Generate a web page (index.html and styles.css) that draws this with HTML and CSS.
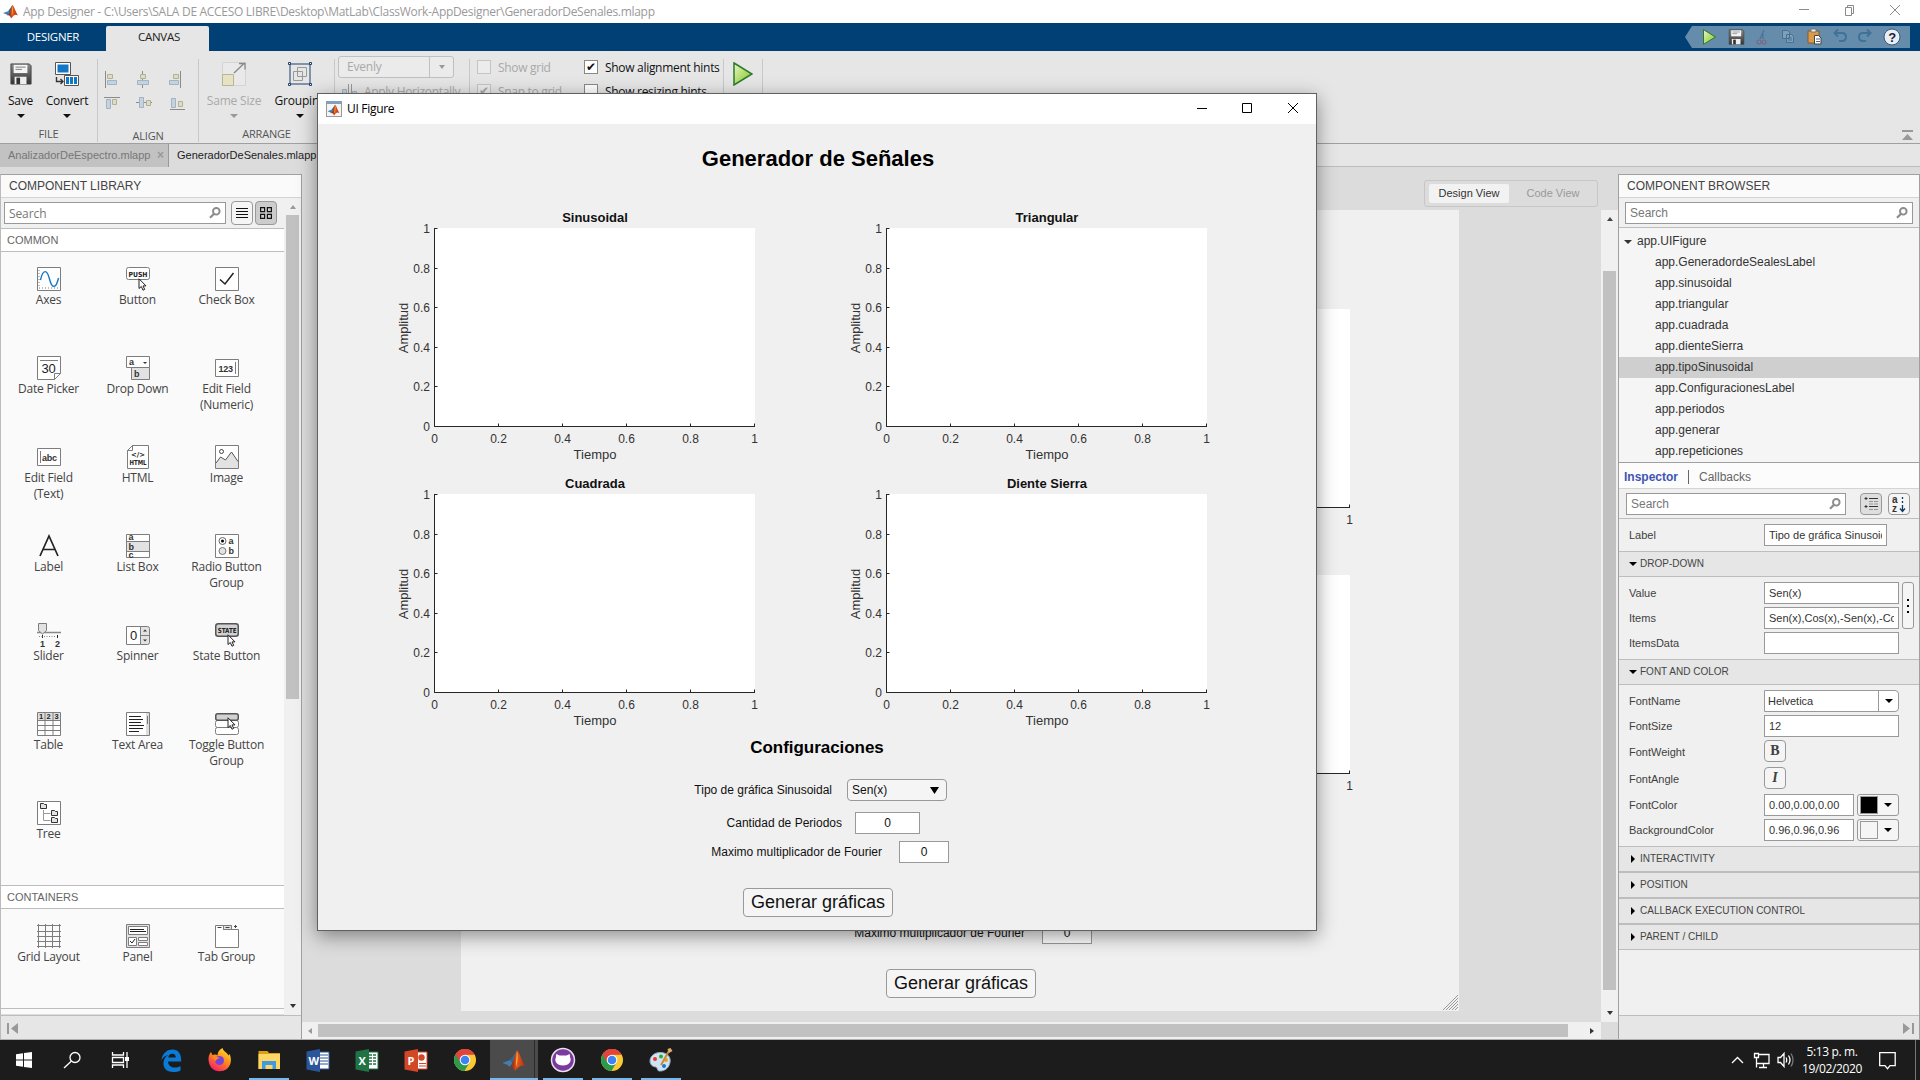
FILE: index.html
```html
<!DOCTYPE html>
<html lang="es">
<head>
<meta charset="utf-8">
<title>App Designer</title>
<link rel="stylesheet" href="styles.css">
</head>
<body>
<svg class="defs" width="0" height="0">
  <defs>
    <linearGradient id="gPlay" x1="0" y1="0" x2="1" y2="1"><stop offset="0" stop-color="#e9f7c4"/><stop offset="1" stop-color="#7cc41c"/></linearGradient>
    <linearGradient id="gDisk" x1="0" y1="0" x2="0" y2="1"><stop offset="0" stop-color="#8a8a8a"/><stop offset="1" stop-color="#333"/></linearGradient>
    <linearGradient id="gFox" x1=".8" y1="0" x2=".2" y2="1"><stop offset="0" stop-color="#ffe226"/><stop offset=".45" stop-color="#ff8a1e"/><stop offset="1" stop-color="#f5156c"/></linearGradient>
    <linearGradient id="gMat" x1="0" y1="0" x2="1" y2="0"><stop offset="0" stop-color="#7a1d10"/><stop offset=".5" stop-color="#e2571c"/><stop offset="1" stop-color="#b02a10"/></linearGradient>
  </defs>
  <symbol id="matlab" viewBox="0 0 24 24"><path d="M0 14.5 8 11.5 11.5 16 7.5 18.500 5 16.500z" fill="#3f7fb5"/><path d="M8 11.500 15 2 12 15.500 11.500 16z" fill="#2a6c9c"/><path d="M15 1.500C17 1.500 20 12 24 18.500 20 15.500 17 18 13 23 11.500 20 10 17 7.500 18.500 11 16 13 4 15 1.500z" fill="url(#gMat)"/><path d="M15 2c1.500 4 1 12-1 17-.5-5 1-12 1-17z" fill="#f7b23b"/></symbol>
  <symbol id="mag" viewBox="0 0 12 12"><circle cx="7.300" cy="4.300" r="3.300" fill="none" stroke="#8c8c8c" stroke-width="1.900"/><path d="M4.800 7 1 10.800" stroke="#8c8c8c" stroke-width="2.200"/></symbol>
  <symbol id="disk" viewBox="0 0 24 24"><path d="M1 1h20l2 2v20H1z" fill="url(#gDisk)" stroke="#444"/><path d="M4 2h15v9H4z" fill="#f4f4f4"/><path d="M6 4.500h11M6 7h7" stroke="#777"/><path d="M5 15h13v8H5z" fill="#eee"/><path d="M7 16h4v7H7z" fill="#333"/></symbol>
  <symbol id="play" viewBox="0 0 20 24"><path d="M1 1 19 12 1 23z" fill="url(#gPlay)" stroke="#2c7a2c" stroke-width="1.500"/></symbol>
  <symbol id="cursor" viewBox="0 0 9 13"><path d="M1 .8v9.700l2.300-2 1.700 3.700 1.700-.8-1.700-3.500h3z" fill="#fff" stroke="#222"/></symbol>
  <symbol id="chrome" viewBox="0 0 24 24"><circle cx="12" cy="12" r="11" fill="#fcc934"/><path d="M12 12 2.500 6.500A11 11 0 0 1 21.500 6.500L12 6.700z" fill="#e0443a"/><path d="M2.500 6.500A11 11 0 0 0 11.500 23L16.500 14.500 12 12z" fill="#2a9a4b"/><path d="M2.500 6.500A11 11 0 0 1 21.500 6.500H12L7 14z" fill="#e0443a"/><circle cx="12" cy="12" r="5.300" fill="#fff"/><circle cx="12" cy="12" r="4.300" fill="#3f83f0"/></symbol>
</svg>

<header class="titlebar">
  <svg width="17" height="15"><use href="#matlab"/></svg>
  <span class="app-title">App Designer - C:\Users\SALA DE ACCESO LIBRE\Desktop\MatLab\ClassWork-AppDesigner\GeneradorDeSenales.mlapp</span>
  <svg class="winctl" width="104" height="12" fill="none" stroke="#8a8a8a"><path d="M1 5.500h10M47.500 3.500h6v8h-6zM49.500 3.500v-2h6v8h-2M92 1l10 10M102 1 92 11"/></svg>
</header>

<nav class="ribbon-tabs">
  <span class="rtab">DESIGNER</span><span class="rtab active">CANVAS</span>
  <svg class="quick" width="225" height="22">
    <path d="M0 11 7 0H225V22H7z" fill="#668cab"/>
    <use href="#play" x="17" y="3" width="15" height="16"/>
    <use href="#disk" x="43" y="3" width="17" height="16"/>
    <g fill="none" stroke="#7b6683" stroke-width="1.200"><circle cx="74" cy="16" r="2"/><circle cx="79" cy="16" r="2"/></g><path d="M75 13 79 4M78 13V8" stroke="#4a7395" stroke-width="1.300"/>
    <g fill="#7fa0ba" stroke="#46708f"><path d="M97.500 4.500h5l2 2v6h-7zM101.500 8.500h5l2 2v6h-7z"/><path d="M103 12h4M103 14h4"/></g>
    <path d="M123 5h11v12h-11z" fill="#d99a4e" stroke="#8a5a20"/><path d="M126 3h5v3h-5z" fill="#eee" stroke="#777"/><path d="M129.500 9.500h4l2.500 2.500v6h-6.500z" fill="#fff" stroke="#444"/><path d="M131 13h4M131 15.500h4" stroke="#567"/>
    <g fill="none" stroke="#3f7299" stroke-width="2"><path d="M150 7h7q4 0 4 4t-4 4h-3M153 3.500 149.500 7l3.500 3.500"/><path d="M185 7h-7q-4 0-4 4t4 4h3M182 3.500l3.500 3.500-3.500 3.500"/></g>
    <circle cx="207" cy="11" r="8" fill="#e8eef5" stroke="#3b5876"/><text x="203.200" y="16" class="qmark">?</text>
  </svg>
</nav>

<section class="toolstrip">
  <div class="group g-file">
    <div class="tools">
      <div class="tool t-save"><svg width="22" height="24"><use href="#disk"/></svg><span>Save</span><i class="dn"></i></div>
      <div class="tool t-conv"><svg width="24" height="24"><path d="M.5.500h15v12H.500z" fill="#fff" stroke="#555"/><path d="M2.500 2.500h11v8h-11z" fill="#1277c4"/><path d="M1.500 15v4.500H8M5.500 17 8 19.500 5.500 22" fill="none" stroke="#333" stroke-width="1.400"/><path d="M9.500 13.500h14v10h-14z" fill="#fff" stroke="#555"/><path d="M11 15h3v7h-3zM15 15h3v7h-3zM19 15h3v7h-3z" fill="#1277c4"/></svg><span>Convert</span><i class="dn"></i></div>
    </div>
    <span class="glabel">FILE</span>
  </div>
  <div class="group g-align">
    <svg class="align" width="80" height="40" fill="#dcdcc8" stroke="#b4b28e">
      <g stroke="#8b8b8b"><path d="M.5 0v17M37.500 0v17M75.500 0v17M-1 26.500h16M65 38.500h15M31 31.500h16" fill="none"/></g>
      <path d="M2.500 3.500h5v4h-5zM35.500 3.500h5v4h-5zM68.500 3.500h5v4h-5zM7.500 28.500h4v5h-4zM41.500 29.500h4v5h-4zM73.500 30.500h4v5h-4z"/>
      <g fill="#c5d3df" stroke="#a3b3c1"><path d="M2.500 9.500h9v4h-9zM32.500 9.500h11v4h-11zM64.500 9.500h9v4h-9zM1.500 28.500h4v9h-4zM34.500 26.500h4v10h-4zM66.500 27.500h4v9h-4z"/></g>
    </svg>
    <span class="glabel">ALIGN</span>
  </div>
  <div class="group g-arr">
    <div class="tools">
      <div class="tool dis t-same"><svg width="24" height="24"><path d="M.5.500h23v23H.500z" fill="#e9e9e9" stroke="#d4d4d4"/><path d="M.5 12.500h11v11H.500z" fill="#e6e2c2" stroke="#b9b592"/><path d="M12 11 22 1.500M17 1.500h6v6" fill="none" stroke="#888" stroke-width="1.300"/></svg><span>Same Size</span><i class="dn"></i></div>
      <div class="tool t-grp"><svg width="24" height="24" fill="none" stroke="#1f3f6b"><path d="M2 2h20v20H2z"/><g stroke="#999"><path d="M5.500 9.500h9v9h-9zM9.500 5.500h9v9h-9z"/></g><path fill="#fff" d="M.5.500h2v2h-2zM21.500.500h2v2h-2zM.5 21.500h2v2h-2zM21.500 21.500h2v2h-2z"/></svg><span>Grouping</span><i class="dn"></i></div>
    </div>
    <span class="glabel">ARRANGE</span>
  </div>
  <div class="group g-space">
    <div class="evenly"><span>Evenly</span><b><i class="dn"></i></b></div>
    <div class="apply"><svg width="16" height="16" fill="#c5d3df" stroke="#a3b3c1"><path d="M.5 5.500h4v8h-4zM10.500 7.500h4v6h-4z"/><path d="M6.500 0v15M9.500 0v15" stroke="#999"/></svg><span>Apply Horizontally</span></div>
  </div>
  <div class="group g-view">
    <div class="checks dis"><label><i class="cb"></i>Show grid</label><label><i class="cb">✔</i>Snap to grid</label></div>
    <div class="checks"><label><i class="cb">✔</i><span>Show alignment hints</span></label><label><i class="cb"></i><span>Show resizing hints</span></label></div>
  </div>
  <div class="group g-run"><svg width="20" height="24"><use href="#play"/></svg></div>
  <svg class="collapse" width="11" height="11" fill="#999"><path d="M0 0h11v2H0zM5.500 4 11 10H0z"/></svg>
</section>

<div class="doctabs"><span class="dtab idle">AnalizadorDeEspectro.mlapp<b>×</b></span><span class="dtab on">GeneradorDeSenales.mlapp</span></div>

<main class="work">
  <aside class="panel library">
    <h2>COMPONENT LIBRARY</h2>
    <div class="libbody">
      <div class="libcol">
        <div class="searchrow"><div class="search seg"><span>Search</span><svg width="12" height="12"><use href="#mag"/></svg></div>
          <div class="tb"><svg width="12" height="12" stroke="#111"><path d="M0 1.500h12M0 4.500h12M0 7.500h12M0 10.500h12"/></svg></div>
          <div class="tb on"><svg width="12" height="12" fill="none" stroke="#111" stroke-width="1.200"><path d="M.6.600h4v4h-4zM7.400.600h4v4h-4zM.6 7.400h4v4h-4zM7.400 7.400h4v4h-4z"/></svg></div>
        </div>
        <h3>COMMON</h3>
        <div class="grid common">
          <div class="comp"><svg width="24" height="24"><path class="bx" d="M.5.500h23v23H.500z"/><path d="M2 3v18h20" fill="none" stroke="#777" stroke-dasharray="1 2"/><path d="M3.500 13C6 2 10 2 12.500 12S19 22 21.500 11" fill="none" stroke="#1277c4" stroke-width="1.400"/></svg><span>Axes</span></div>
          <div class="comp"><svg width="24" height="24"><rect class="bx" x=".5" y=".5" width="23" height="12" rx="2"/><text x="2.500" y="9.500" class="px" textLength="19" lengthAdjust="spacingAndGlyphs">PUSH</text><use href="#cursor" x="12" y="11" width="9" height="13"/></svg><span>Button</span></div>
          <div class="comp"><svg width="24" height="24"><path class="bx" d="M.5.500h23v23H.500z"/><path d="M5 12.500 10 17 18.500 6" fill="none" stroke="#222" stroke-width="1.500"/></svg><span>Check Box</span></div>
          <div class="comp"><svg width="24" height="24"><path class="bx" d="M.5.500h23v17l-6 6H.500zM17.500 23.500v-6h6M3 4.500h18"/><text x="4.500" y="17" class="ic12">30</text></svg><span>Date Picker</span></div>
          <div class="comp"><svg width="24" height="24"><path class="bx" d="M.5.500h23v11H.500z"/><path class="bx gy" d="M5.500 11.500h18v12h-18z"/><path d="M17 6h4l-2 2z" fill="#333"/><text x="3" y="9" class="ic9">a</text><text x="8" y="21" class="ic9">b</text></svg><span>Drop Down</span></div>
          <div class="comp"><svg width="24" height="24"><path class="bx" d="M.5 3.500h23v17H.500zM20.500 6v12"/><text x="3.500" y="15.500" class="ic9">123</text></svg><span>Edit Field<br>(Numeric)</span></div>
          <div class="comp"><svg width="24" height="24"><path class="bx" d="M.5 3.500h23v17H.500zM3.500 6v12"/><text x="5" y="15.500" class="ic9">abc</text></svg><span>Edit Field<br>(Text)</span></div>
          <div class="comp"><svg width="24" height="24"><path class="bx" d="M6.500.500h16v23h-21v-18zM6.500.500v5h-5"/><text x="5" y="11.500" class="px" textLength="14" lengthAdjust="spacingAndGlyphs">&lt;/&gt;</text><text x="3.500" y="20" class="px" textLength="17" lengthAdjust="spacingAndGlyphs">HTML</text></svg><span>HTML</span></div>
          <div class="comp"><svg width="24" height="24"><path class="bx" d="M.5.500h23v23H.500z"/><path d="M1 18 5.500 12l5 3L16.500 7 23 16.500V23H1z" fill="#e2e2e2"/><path d="M1 18 5.500 12l5 3L16.500 7 23 16.500" fill="none" stroke="#555"/><circle cx="6.500" cy="6.500" r="2" fill="none" stroke="#444"/></svg><span>Image</span></div>
          <div class="comp"><svg width="24" height="24"><path d="M3 22 12 2 21 22M6.500 15.500h11" fill="none" stroke="#222" stroke-width="1.700"/></svg><span>Label</span></div>
          <div class="comp"><svg width="24" height="24"><path class="bx" d="M.5.500h23v23H.500z"/><path class="bx gy" d="M.5 7.500h23v10H.500z"/><text x="2.500" y="5.500" class="ic9">a</text><text x="2.500" y="16" class="ic9">b</text><text x="2.500" y="24" class="ic9">c</text></svg><span>List Box</span></div>
          <div class="comp"><svg width="24" height="24"><path class="bx" d="M.5.500h23v23H.500z"/><circle cx="7.500" cy="7" r="3.500" fill="#fff" stroke="#666"/><circle cx="7.500" cy="7" r="1.500"/><circle cx="7.500" cy="17" r="3.500" fill="#e2e2e2" stroke="#777"/><text x="13.500" y="9.500" class="ic9">a</text><text x="13.500" y="20" class="ic9">b</text></svg><span>Radio Button<br>Group</span></div>
          <div class="comp"><svg width="24" height="24"><path d="M0 9.500h24" stroke="#888" stroke-width="1.500"/><path class="bx gy" d="M1.500.500h8v7l-4 3.500-4-3.500z"/><path d="M5.500 12v3M20.500 12v3" stroke="#222"/><path d="M2 13.500h17" stroke="#888" stroke-dasharray="1 1.500"/><text x="3" y="23.500" class="ic9">1</text><text x="18" y="23.500" class="ic9">2</text></svg><span>Slider</span></div>
          <div class="comp"><svg width="24" height="24"><rect class="bx gy" x=".5" y="3.500" width="23" height="18" rx="2"/><path class="bx" d="M.5 3.500h14v18H.500zM14.500 12.500h9"/><path d="m19 6.500 2 2h-4zM19 18.500l2-2h-4z" fill="#333"/><text x="4" y="16.800" class="ic12">0</text></svg><span>Spinner</span></div>
          <div class="comp"><svg width="24" height="24"><rect x=".75" y=".75" width="22.500" height="12.500" rx="2.500" fill="#d2d2d2" stroke="#555" stroke-width="1.500"/><text x="2.700" y="10" class="px" textLength="19" lengthAdjust="spacingAndGlyphs">STATE</text><use href="#cursor" x="12" y="11" width="9" height="13"/></svg><span>State Button</span></div>
          <div class="comp"><svg width="24" height="24"><path class="bx" d="M.5.500h23v23H.500z"/><path d="M1 1h22v7H1z" fill="#dedede"/><path class="bx nf" d="M.5 8.500h23M.5 13.500h23M.5 18.500h23M8 0v24M16 0v24"/><text x="2" y="7.300" class="ic8">1</text><text x="9.500" y="7.300" class="ic8">2</text><text x="17.500" y="7.300" class="ic8">3</text></svg><span>Table</span></div>
          <div class="comp"><svg width="24" height="24"><path class="bx" d="M.5.500h23v23H.500z"/><path d="M20 1h3v22h-3z" fill="#ddd"/><path d="M21.500 4v8" stroke="#777"/><path d="M3 4.500h12M3 7.500h14M3 10.500h12M3 13.500h15M3 16.500h14M3 19.500h10" stroke="#222"/></svg><span>Text Area</span></div>
          <div class="comp"><svg width="24" height="24"><rect class="bx" x=".5" y="8.500" width="23" height="7" rx="2"/><rect class="bx" x=".5" y="15.500" width="23" height="7" rx="2"/><rect x=".75" y="1.750" width="22.500" height="6.500" rx="2" fill="#d2d2d2" stroke="#555" stroke-width="1.500"/><use href="#cursor" x="12" y="5" width="9" height="13"/></svg><span>Toggle Button<br>Group</span></div>
          <div class="comp"><svg width="24" height="24"><path class="bx" d="M.5.500h23v23H.500z"/><path d="M6.500 9v10.500h7M6.500 12.500h7" fill="none" stroke="#999"/><path d="M3.500 2.500h3l1 1h2v4h-6zM14.500 9.500h3l1 1h2v4h-6zM14.500 16.500h3l1 1h2v4h-6z" fill="#e2e2e2" stroke="#333"/></svg><span>Tree</span></div>
        </div>
        <h3>CONTAINERS</h3>
        <div class="grid cont">
          <div class="comp"><svg width="24" height="24"><path class="bx" d="M1.500 0v24M8.500 0v24M15.500 0v24M22.500 0v24M0 1.500h24M0 7.500h24M0 12.500h24M0 17.500h24M0 22.500h24"/></svg><span>Grid Layout</span></div>
          <div class="comp"><svg width="24" height="24"><path class="bx gy" d="M.5.500h23v23H.500z"/><path class="bx" d="M2.500 2.500h19v8h-19zM2.500 13.500h8v8h-8zM12.500 13.500h9v3h-9zM12.500 18.500h9v3h-9z"/><path d="M4 5.500h14M4 7.500h16M4 17l2 2 3-4" fill="none" stroke="#222"/></svg><span>Panel</span></div>
          <div class="comp"><svg width="24" height="24"><path class="bx" d="M.5 1.500h8v4h15v18H.500z"/><path class="bx gy" d="M8.500 1.500h8v4h-8z"/><path d="M2.500 3.500h4M10.500 3.500h4M20.500 1v3M19 2.500h3" stroke="#444"/></svg><span>Tab Group</span></div>
        </div>
      </div>
      <div class="vbar lib"><i class="up lt"></i><b></b><i class="dn"></i></div>
    </div>
    <footer><svg width="12" height="11" fill="#999"><path d="M0 0h2v11H0zM11 0v11L4 5.500z"/></svg></footer>
  </aside>

  <section class="center">
    <div class="viewport">
      <div class="viewcol">
        <div class="toggle"><span class="on">Design View</span><span>Code View</span></div>
        <div class="sheet">
          <div class="axes s1" data-behind></div>
          <div class="axes s2" data-behind></div>
          <div class="frow smax"><label>Maximo multiplicador de Fourier</label><span class="num">0</span></div>
          <div class="genbtn sgen">Generar gráficas</div>
          <svg class="grip" width="15" height="15" stroke="#999"><path d="M0 15 15 0M3 15 15 3M6 15 15 6M9 15l6-6M12 15l3-3"/></svg>
        </div>
      </div>
      <div class="vbar mid"><i class="up"></i><b></b><i class="dn"></i></div>
    </div>
    <div class="hbar"><i class="lf"></i><b></b><i class="rt"></i><u></u></div>
  </section>

  <aside class="panel browser">
    <h2>COMPONENT BROWSER</h2>
    <div class="searchrow b1"><div class="search"><span>Search</span><svg width="12" height="12"><use href="#mag"/></svg></div></div>
    <div class="tree">
      <div class="node root"><i class="dn"></i>app.UIFigure</div>
      <div class="node">app.GeneradordeSealesLabel</div><div class="node">app.sinusoidal</div><div class="node">app.triangular</div><div class="node">app.cuadrada</div><div class="node">app.dienteSierra</div><div class="node sel">app.tipoSinusoidal</div><div class="node">app.ConfiguracionesLabel</div><div class="node">app.periodos</div><div class="node">app.generar</div><div class="node">app.repeticiones</div>
    </div>
    <div class="itabs"><b>Inspector</b><span>Callbacks</span></div>
    <div class="searchrow b2"><div class="search"><span>Search</span><svg width="12" height="12"><use href="#mag"/></svg></div>
      <div class="tb on"><svg width="14" height="14"><path d="M2 0v3M.5 1.500h3M2 8v3M.5 9.500h3" stroke="#333"/><path d="M5 1.500h9M5 9.500h9" stroke="#333"/><path d="M5 4.500h9M5 7h9M5 12.500h9" stroke="#999" stroke-dasharray="4 1"/></svg></div>
      <div class="tb"><svg width="14" height="18"><text x="0" y="8" class="az">a</text><text x="0" y="17" class="az">z</text><path d="M10.500 2v2M10.500 6v2M10.500 10v6M8 13.500l2.500 3 2.500-3" stroke="#0d3b6b" fill="none" stroke-width="1.300"/></svg></div>
    </div>
    <div class="props one"><div class="prow"><label>Label</label><span class="inp w123">Tipo de gráfica Sinusoidal</span></div></div>
    <h4><i class="dn"></i>DROP-DOWN</h4>
    <div class="props split">
      <div class="pcol"><div class="prow"><label>Value</label><span class="inp">Sen(x)</span></div><div class="prow"><label>Items</label><span class="inp">Sen(x),Cos(x),-Sen(x),-Cos(x)</span></div><div class="prow"><label>ItemsData</label><span class="inp"></span></div></div>
      <div class="more"><i></i><i></i><i></i></div>
    </div>
    <h4><i class="dn"></i>FONT AND COLOR</h4>
    <div class="props fonts">
      <div class="prow"><label>FontName</label><span class="inp combo">Helvetica<b><i class="dn"></i></b></span></div>
      <div class="prow"><label>FontSize</label><span class="inp">12</span></div>
      <div class="prow low"><label>FontWeight</label><span class="sq bold">B</span></div>
      <div class="prow ang low"><label>FontAngle</label><span class="sq ital">I</span></div>
      <div class="prow col"><label>FontColor</label><span class="inp w90">0.00,0.00,0.00</span><span class="pick"><em class="blk"></em><i class="dn"></i></span></div>
      <div class="prow"><label>BackgroundColor</label><span class="inp w90">0.96,0.96,0.96</span><span class="pick"><em></em><i class="dn"></i></span></div>
    </div>
    <h4 class="c"><i class="rt"></i>INTERACTIVITY</h4><h4 class="c"><i class="rt"></i>POSITION</h4><h4 class="c"><i class="rt"></i>CALLBACK EXECUTION CONTROL</h4><h4 class="c"><i class="rt"></i>PARENT / CHILD</h4>
    <div class="rest"></div>
    <footer><svg width="11" height="11" fill="#999"><path d="M9 0h2v11H9zM0 0v11l7-5.500z"/></svg></footer>
  </aside>
</main>

<footer class="taskbar">
  <svg class="apps" width="700" height="40">
    <path d="M490 0h48v40h-48z" fill="#4b4b4b"/><path d="M534.500 0v40" stroke="#2c2c2c"/>
    <path d="M249 38h40v2h-40zM490 38h48v2h-48zM543 38h40v2h-40zM592 38h40v2h-40zM641 38h40v2h-40z" fill="#76b9ed"/>
    <path d="M16 14.200 23 13.200V19.500H16zM24 13 32 12V19.500H24zM16 20.500H23V26.800L16 25.800zM24 20.500H32V28L24 27z" fill="#fff"/>
    <g fill="none" stroke="#fff" stroke-width="1.300"><circle cx="75" cy="17.500" r="5"/><path d="M71.200 21.200 64 28"/><path d="M112.500 12v3h11v-3M112.500 28v-3h11v3M112.500 17.500h11v5h-11zM127 12v16"/></g><path d="M125 17h4v4h-4z" fill="#fff"/>
    <path d="M161.500 19.500C163 12.500 167.500 9.500 172.500 9.500 178.500 9.500 181.500 14 181.200 21.500H168c.3 4 3.300 6 6.500 6 2.500 0 4.500-.5 6-1.500v4.500c-2 1.200-4.500 1.600-7.500 1.600-6.500 0-10-4-9.500-9.500.3-3.500 2-6 5-7.500-3.500.5-5.500 2.500-7 5zM168.300 17.500h7.500c0-2.300-1.300-3.800-3.500-3.800s-3.700 1.500-4 3.800z" fill="#0a7ad6"/>
    <path d="M208.500 19c0-3 1-5 2.500-7l1.500 3c2-1 4-.5 5 .5 0-3 1.500-6 5-7.500 1 3.500 4 4 6 7.500l1-1.500c3 5 2 17-10 17.300-6.500 0-11-5-11-12.300z" fill="url(#gFox)"/><circle cx="219.500" cy="20.500" r="4.500" fill="#7a41d8"/><path d="M212 17c3-1.500 5 1 8 .5-1.500 2-4.500 1-4 4z" fill="#ff8a1e"/>
    <path d="M258.500 11h9l1.500 2h11v16h-21.500z" fill="#d9a014"/><path d="M258.500 14h21.500v15h-21.500z" fill="#fdd663"/><path d="M262 21h14v8h-3.500v-4h-7v4H262z" fill="#3e9be0"/>
    <g><path d="M317 12h12v17h-12z" fill="#fff" stroke="#2b579a"/><path d="M320 15h8M320 18h8M320 21h8M320 24h8" stroke="#2b579a"/><path d="M306.500 11.500 320 9v23l-13.500-2.500z" fill="#2b579a"/><text x="308.500" y="24.500" class="office">W</text></g>
    <g><path d="M366 12h12v17h-12z" fill="#fff" stroke="#217346"/><path d="M369 15h8M369 18h8M369 21h8M369 24h8" stroke="#217346" stroke-width="1.500" stroke-dasharray="3 1"/><path d="M355.500 11.500 369 9v23l-13.500-2.500z" fill="#217346"/><text x="358.500" y="24.500" class="office">X</text></g>
    <g><path d="M415 12h12v17h-12z" fill="#fff" stroke="#d24726"/><path d="M419 23.500h7M419 26h7" stroke="#d24726"/><circle cx="421.500" cy="17.500" r="3.200" fill="#d24726"/><path d="M404.500 11.500 418 9v23l-13.500-2.500z" fill="#d24726"/><text x="407.500" y="24.500" class="office">P</text></g>
    <use href="#chrome" x="453" y="8" width="24" height="24"/>
    <use href="#matlab" x="502" y="9" width="24" height="23"/>
    <circle cx="563" cy="20" r="11.500" fill="#7b3aa0" stroke="#e8e0ee" stroke-width="1.500"/><path d="M556.500 14l3 1.500h7l3-1.500c.8 2 .5 3 .5 3 2 4-.5 8.500-7 8.500s-9-4.500-7-8.500c0 0-.3-1 .5-3z" fill="#fff"/>
    <use href="#chrome" x="600" y="8" width="24" height="24"/>
    <path d="M650 21c0-5 5-9 11-8.500 7 .5 10 5 9 10-1 6-6 9-11 8.500-2 0-1-3.500-3.500-4-2.500-.3-5.500-2-5.500-6z" fill="#cfe3f1" stroke="#8aa9be"/><circle cx="655" cy="19" r="2" fill="#e33"/><circle cx="661" cy="16.500" r="2" fill="#3a3"/><circle cx="666" cy="20" r="2" fill="#e8a21c"/><circle cx="664" cy="26" r="2" fill="#27c"/><path d="m661 25 8.500-15" stroke="#c98a3c" stroke-width="2"/><path d="m667.500 9 3-1 2 3-3.500 2z" fill="#e0b06a"/>
  </svg>
  <svg class="tray" width="72" height="40" fill="none" stroke="#fff" stroke-width="1.300"><path d="m2 23 5.500-5.500L13 23"/><path d="M28 14.500h11v9H27M24.500 13.500h4v4h-4zM26.500 17.500v10M29 27.500h8M33.500 24v3.500"/><path d="M48 17.500h2.500l3.500-4v13l-3.500-4H48zM56 17.500q1.500 2.500 0 5M58.500 15.500q3 4.500 0 9"/><path d="M61 13.500q4 6.500 0 13" stroke="#777"/></svg>
  <div class="clock"><span>5:13 p. m.</span><span>19/02/2020</span></div>
  <svg class="note" width="17" height="18" fill="none" stroke="#fff" stroke-width="1.300"><path d="M.7.700h15.500v13H11l-2.500 3-2.500-3H.700z"/></svg>
  <i class="peek"></i>
</footer>

<div class="window">
  <div class="wtitle"><span class="wicon"><svg width="13" height="12"><use href="#matlab"/></svg></span><span class="wtext">UI Figure</span>
    <svg class="wctl" width="104" height="12" fill="none" stroke="#000"><path d="M1 6.500h10M46.500 1.500h9v9h-9zM92 1l10 10M102 1 92 11"/></svg></div>
  <div class="client">
    <h1>Generador de Señales</h1>
    <div class="axes a1" data-title="Sinusoidal"></div>
    <div class="axes a2" data-title="Triangular"></div>
    <div class="axes a3" data-title="Cuadrada"></div>
    <div class="axes a4" data-title="Diente Sierra"></div>
    <div class="conf">Configuraciones</div>
    <div class="frow r1"><label>Tipo de gráfica Sinusoidal</label><span class="drop">Sen(x)<svg width="9" height="7"><path d="M0 0h9L4.500 7z"/></svg></span></div>
    <div class="frow r2"><label>Cantidad de Periodos</label><span class="num">0</span></div>
    <div class="frow r3"><label>Maximo multiplicador de Fourier</label><span class="num">0</span></div>
    <div class="genbtn wgen">Generar gráficas</div>
  </div>
</div>
<script src="axes.js"></script>
</body>
</html>
```
FILE: styles.css
```css
* { box-sizing: border-box; }
body { margin: 0; width: 1920px; height: 1080px; overflow: hidden; display: flex; flex-direction: column; position: relative; font: 12px/16px "Liberation Sans", Arial, sans-serif; color: #404040; background: #dcdcdc; }
.defs { position: absolute; }
svg { display: block; flex: none; }
h1, h2, h3, h4 { margin: 0; font-weight: normal; }
i { font-style: normal; }
.dn, .up, .lf, .rt { width: 0; height: 0; flex: none; border: 3.5px solid transparent; }
.dn { border-top: 4px solid #333; border-bottom: 0; }
.up { border-bottom: 4px solid #444; border-top: 0; }
.up.lt { border-bottom-color: #999; }
.lf { border-right: 4px solid #999; border-left: 0; }
.rt { border-left: 4px solid #333; border-right: 0; }

.titlebar { height: 23px; flex: none; background: #fff; display: flex; align-items: center; padding: 0 18px 0 2px; }
.app-title { margin-left: 4px; font: 12px/20px "Open Sans", "Noto Sans", sans-serif; color: #999; letter-spacing: -.3px; white-space: nowrap; }
.winctl { margin: -3px 0 0 auto; }

.ribbon-tabs { height: 28px; flex: none; background: #004074; display: flex; align-items: flex-end; }
.rtab { width: 106px; height: 25px; line-height: 22px; text-align: center; color: #fff; font-family: "Open Sans", "Noto Sans", sans-serif; font-size: 11.5px; letter-spacing: -.3px; }
.rtab.active { width: 103px; background: #e6e6e6; color: #222; border-radius: 2px 2px 0 0; padding-left: 3px; }
.quick { margin: 0 10px 3px auto; }
.qmark { font: bold 13px "Liberation Sans", sans-serif; fill: #223; }

.toolstrip { height: 93px; flex: none; background: #e6e6e6; border-bottom: 1px solid #a0a0a0; display: flex; padding: 8px 0 0; font: 12px/16px "Open Sans", "Noto Sans", sans-serif; color: #111; overflow: hidden; }
.group { height: 83px; border-right: 1px solid #c8c8c8; display: flex; flex-direction: column; align-items: center; }
.g-file { width: 98px; } .g-align { width: 101px; } .g-arr { width: 136px; } .g-space { width: 135px; } .g-view { width: 254px; } .g-run { width: 39px; padding-top: 3px; }
.tools { display: flex; height: 69px; width: 100%; }
.tool { display: flex; flex-direction: column; align-items: center; padding-top: 3px; letter-spacing: -.2px; white-space: nowrap; }
.tool span { margin: 7px 0 5px; }
.tool .dn { border-width: 4px 4px 0; border-top-color: #111; }
.t-save { width: 41px; } .t-conv { width: 52px; }
.t-same { width: 70px; } .t-grp { width: 62px; }
.dis { color: #a9a9a9; } .dis .dn, .evenly .dn { border-top-color: #999; }
.glabel { font-size: 11px; line-height: 16px; color: #555; letter-spacing: -.2px; padding-top: 2px; }
.align { margin: 12px 6px 17px 0; overflow: visible; }
.g-align .glabel { padding-top: 0; }
.g-space { align-items: flex-start; padding-left: 3px; }
.evenly { width: 116px; height: 22px; margin-top: -3px; border: 1px solid #c0c0c0; border-radius: 3px; color: #a9a9a9; display: flex; align-items: center; padding-left: 8px; background: #ebebeb; letter-spacing: -.2px; }
.evenly b { margin-left: auto; width: 24px; height: 20px; border-left: 1px solid #c0c0c0; display: flex; align-items: center; justify-content: center; }
.apply { display: flex; gap: 6px; padding: 6px 0 0 4px; color: #a9a9a9; white-space: nowrap; letter-spacing: -.3px; }
.g-view { flex-direction: row; align-items: flex-start; padding-left: 7px; }
.checks { display: flex; flex-direction: column; gap: 8px; width: 107px; letter-spacing: -.3px; line-height: 18px; white-space: nowrap; }
.checks label { display: flex; gap: 7px; height: 16px; }
.cb { flex: none; width: 14px; height: 14px; margin-top: 1px; border: 1px solid #888; background: #fff; font: 12px/12px "DejaVu Sans", sans-serif; text-align: center; letter-spacing: 0; }
.dis .cb { border-color: #c4c4c4; background: #ececec; }
.collapse { margin: 71px 7px 0 auto; }

.doctabs { height: 23px; flex: none; background: #e6e6e6; border-bottom: 1px solid #bdbdbd; display: flex; }
.dtab { line-height: 22px; padding-left: 8px; white-space: nowrap; font-size: 11px; }
.dtab.idle { width: 169px; height: 23px; background: #c2c2c2; border-right: 1px solid #999; color: #777; display: flex; justify-content: space-between; padding-right: 4px; }
.dtab b { color: #999; font-size: 12px; }
.dtab.on { width: 160px; height: 23px; background: #dcdcdc; color: #222; }

.work { flex: 1; min-height: 0; display: flex; background: #dcdcdc; border-bottom: 1px solid #b0b0b0; }
.panel { width: 302px; flex: none; margin-top: 7px; border: solid #a0a0a0; border-width: 1px 1px 0 1px; background: #fafafa; display: flex; flex-direction: column; }
.library { border-left-color: #bbb; }
.browser { background: #f0f0f0; }
.panel h2 { height: 23px; flex: none; font-size: 12px; line-height: 22px; padding-left: 8px; background: #fafafa; border-bottom: 1px solid #d4d4d4; color: #444; }
.panel footer { height: 24px; flex: none; background: #e6e6e6; border-top: 1px solid #bdbdbd; padding: 7px 5px 0 6px; }
.browser footer svg { margin-left: auto; }
.libbody { flex: 1; min-height: 0; display: flex; }
.libcol { width: 283px; background: #fafafa; overflow: hidden; border-bottom: 1px solid #ddd; }
.searchrow { height: 30px; background: #f0f0f0; display: flex; padding: 4px 0 0 3px; }
.search { width: 222px; height: 22px; border: 1px solid #999; background: #fff; color: #777; display: flex; justify-content: space-between; align-items: center; padding: 0 4px; }
.search.seg { font-family: "Open Sans", "Noto Sans", sans-serif; margin-right: 5px; letter-spacing: -.1px; }
.seg span { padding-top: 1px; }
.tb { width: 22px; height: 24px; margin: -1px 2px 0 0; border: 1px solid #999; border-radius: 4px; background: #f5f5f5; display: flex; align-items: center; justify-content: center; }
.tb.on { background: #ccc; }
h3 { height: 24px; line-height: 22px; font-size: 11px; padding-left: 6px; color: #666; background: #fff; border: solid #bdbdbd; border-width: 1px 0; }
.grid { display: grid; grid-template-columns: repeat(3, 89px); grid-auto-rows: 89px; padding: 15px 0 0 3px; font: 12px/16px "Open Sans", "Noto Sans", sans-serif; }
.common { height: 633px; }
.cont { height: 100px; border-bottom: 1px solid #bdbdbd; }
.comp { display: flex; flex-direction: column; align-items: center; text-align: center; gap: 1px; letter-spacing: -.22px; color: #444; }
.bx { fill: #fff; stroke: #7d7d7d; } .gy { fill: #e2e2e2; } .nf { fill: none; }
.px { font: bold 7px "DejaVu Sans", sans-serif; fill: #222; letter-spacing: 0; }
.ic12 { font: 13px "Liberation Sans", sans-serif; fill: #222; }
.ic9 { font: bold 9px "Liberation Sans", sans-serif; fill: #333; }
.ic8 { font: bold 7.500px "Liberation Sans", sans-serif; fill: #222; }
.az { font: bold 10px "Liberation Sans", sans-serif; fill: #333; }
.vbar { width: 17px; background: #f0f0f0; display: flex; flex-direction: column; align-items: center; }
.vbar b { width: 13px; background: #c1c1c1; }
.lib .up { margin: 7px 0 6px; } .lib b { height: 484px; } .lib .dn { margin-top: auto; margin-bottom: 7px; }

.center { flex: 1; min-width: 0; display: flex; flex-direction: column; }
.viewport { flex: 1; min-height: 0; display: flex; }
.viewcol { flex: 1; display: flex; flex-direction: column; padding-top: 13px; }
.toggle { align-self: flex-end; width: 174px; height: 27px; margin: 0 3px 3px 0; border: 1px solid #c6c6c6; border-radius: 3px; display: flex; gap: 4px; padding: 3px 4px; font-size: 11px; line-height: 19px; text-align: center; color: #999; }
.toggle span { width: 80px; height: 19px; } .toggle .on { background: #f2f2f2; color: #333; border-radius: 2px; }
.sheet { position: relative; width: 998px; height: 801px; margin-left: 159px; background: #f0f0f0; }
.mid { margin-top: 43px; } .mid .up { margin: 7px 0 50px; } .mid b { height: 719px; } .mid .dn { margin-top: auto; margin-bottom: 7px; }
.hbar { height: 17px; flex: none; background: #f0f0f0; display: flex; align-items: center; padding-left: 6px; }
.hbar b { height: 13px; width: 1250px; background: #c1c1c1; margin: 0 22px 0 6px; }
.hbar u { width: 17px; height: 17px; margin-left: auto; background: #dcdcdc; }
.grip { position: absolute; right: 1px; bottom: 1px; }

.b1 { border-bottom: 1px solid #bdbdbd; padding-left: 6px; } .b1 .search { width: 288px; }
.tree { height: 235px; flex: none; padding-top: 3px; background: #f5f5f5; border-bottom: 1px solid #a0a0a0; }
.node { height: 21px; line-height: 21px; padding-left: 36px; color: #333; }
.root { display: flex; align-items: center; padding-left: 5px; gap: 5px; }
.root .dn, .props .dn, h4 .dn { border-width: 4px 4px 0; }
.node.sel { background: #cfcfcf; }
.itabs { height: 26px; flex: none; background: #fcfcfc; border-bottom: 1px solid #d4d4d4; display: flex; align-items: center; padding: 2px 0 0 5px; color: #666; }
.itabs b { color: #3f54b5; padding-right: 10px; border-right: 1px solid #666; line-height: 14px; margin-right: 10px; }
.b2 { border-bottom: 1px solid #bdbdbd; padding-left: 7px; } .b2 .search { width: 220px; margin-right: 14px; }
.b2 .tb { height: 22px; margin: 0 6px 0 0; } .b2 .tb.on { background: #dedede; }
.props { font-size: 11px; flex: none; padding: 5px 0 0 10px; }
.one { height: 32px; } .split { height: 82px; display: flex; gap: 3px; } .fonts { height: 161px; }
.prow { display: flex; height: 25px; line-height: 22px; }
.prow label { width: 135px; }
.low label { padding-top: 1px; }
.inp { width: 135px; height: 22px; line-height: 20px; padding: 0 4px; border: 1px solid #999; background: #fff; color: #333; overflow: clip; overflow-clip-margin: content-box; white-space: nowrap; }
.w123 { width: 123px; } .w90 { width: 90px; }
.combo { display: flex; border-radius: 0 4px 4px 0; padding: 0 0 0 3px; }
.combo b { width: 20px; margin-left: auto; border-left: 1px solid #999; display: flex; align-items: center; justify-content: center; }
.props .dn, h4 .dn { border-top-color: #000; }
.sq { width: 22px; height: 22px; border: 1px solid #999; border-radius: 4px; background: #f5f5f5; text-align: center; font: bold 14px/20px "Liberation Serif", serif; }
.ital { font-style: italic; }
.prow.ang { padding-top: 2px; height: 29px; }
.pick { width: 42px; height: 22px; margin-left: 3px; border: 1px solid #999; border-radius: 3px; background: #f5f5f5; display: flex; align-items: center; gap: 6px; padding-left: 2px; }
.pick em { width: 18px; height: 18px; border: 1px solid #999; } .blk { background: #000; }
.more { width: 12px; height: 47px; border: 1px solid #999; border-radius: 3px; background: #f5f5f5; display: flex; flex-direction: column; align-items: center; justify-content: center; gap: 4px; }
.more i { width: 2px; height: 2px; background: #000; }
h4 { height: 26px; flex: none; background: #e6e6e6; border: solid #bdbdbd; border-width: 1px 0; display: flex; align-items: center; gap: 3px; padding-left: 10px; font-size: 10px; color: #444; }
h4 .rt { margin: 0 2px; border-left-color: #000; border-width: 4px 0 4px 4px; }
.rest { flex: 1; }

.taskbar { height: 40px; flex: none; background: #1c1c1c; display: flex; color: #fff; }
.office { font: bold 11px "Open Sans", sans-serif; fill: #fff; }
.tray { margin-left: 1030px; }
.clock { width: 66px; display: flex; flex-direction: column; align-items: center; font: 12px/17px "Open Sans", "Noto Sans", sans-serif; letter-spacing: -.35px; padding-top: 3px; margin-left: -3px; }
.note { margin: 12px 0 0 14px; }
.peek { width: 1px; background: #777; margin-left: auto; margin-right: 4px; }

.window { position: absolute; left: 317px; top: 93px; width: 1000px; height: 838px; border: 1px solid #606060; background: #f0f0f0; box-shadow: 0 5px 18px rgba(0, 0, 0, .42); color: #000; }
.wtitle { height: 30px; background: #fff; display: flex; align-items: center; padding: 0 16px 0 8px; }
.wicon { width: 16px; height: 16px; border: 1px solid #999; border-top: 3px solid #7fa0c4; background: #f4f4f4; }
.wtext { margin-left: 5px; font: 12px/16px "Open Sans", "Noto Sans", sans-serif; letter-spacing: -.3px; }
.wctl { margin: -2px 0 0 auto; }
.client { position: relative; height: 806px; }
h1 { position: absolute; left: 0; width: 1000px; top: 21px; text-align: center; font: bold 22px/28px "Liberation Sans", Arial, sans-serif; }
.axes, .frow, .conf, .genbtn { position: absolute; }
.axes svg { overflow: visible; }
.axes text { font: 12px "Liberation Sans", Arial, sans-serif; fill: #333; }
.axes .lab { font-size: 13px; } .axes .ttl { font-size: 13px; font-weight: bold; fill: #111; }
.a1 { left: 116px; top: 104px; } .a2 { left: 568px; top: 104px; } .a3 { left: 116px; top: 370px; } .a4 { left: 568px; top: 370px; }
.s1 { left: 568px; top: 99px; } .s2 { left: 568px; top: 365px; }
.conf { left: 400px; width: 198px; top: 614px; text-align: center; font-size: 17px; letter-spacing: -.05px; font-weight: bold; line-height: 20px; }
.frow { display: flex; justify-content: flex-end; line-height: 22px; white-space: nowrap; color: #111; }
.num { height: 22px; border: 1px solid #999; background: #fff; text-align: center; line-height: 20px; }
.drop { width: 100px; height: 22px; border: 1px solid #999; border-radius: 4px; background: #f5f5f5; line-height: 20px; padding: 0 7px 0 4px; display: flex; justify-content: space-between; align-items: center; margin-left: 15px; }
.r1 { right: 369px; top: 655px; }
.r2 { right: 396px; top: 688px; } .r2 .num { width: 65px; margin-left: 13px; }
.r3 { right: 367px; top: 717px; } .r3 .num, .smax .num { width: 50px; margin-left: 17px; }
.genbtn { width: 150px; height: 29px; border: 1px solid #999; border-radius: 4px; background: #f5f5f5; font-size: 18px; line-height: 26px; text-align: center; color: #111; }
.wgen { left: 425px; top: 764px; }
.smax { right: 367px; top: 712px; } .sgen { left: 425px; top: 759px; }
```
FILE: axes.js
```js
// Draws an empty 0..1 x 0..1 plot in every .axes holder.
// Plots on the design sheet lie behind the figure window: only their right end is labelled.
const W = 321, H = 199;
for (const el of document.querySelectorAll('.axes')) {
  const behind = 'behind' in el.dataset;
  let ticks = '', labels = '';
  for (let i = behind ? 5 : 0; i <= 5; i++) {
    const v = String(i / 5);
    const x = Math.round(i * (W - 1) / 5), y = Math.round((H - 1) * (1 - i / 5));
    ticks += `M${x + .5} ${H - .5}v-3M.5 ${y + .5}h3`;
    labels += `<text x="${x + .5}" y="${H + 16}" text-anchor="middle">${v}</text>`;
    if (!behind) labels += `<text x="-4" y="${y + 5}" text-anchor="end">${v}</text>`;
  }
  if (!behind) labels += `<text class="ttl" x="161" y="-6" text-anchor="middle">${el.dataset.title}</text>
    <text class="lab" x="161" y="${H + 32}" text-anchor="middle">Tiempo</text>
    <text class="lab" transform="translate(-26 100) rotate(-90)" text-anchor="middle">Amplitud</text>`;
  el.innerHTML = `<svg width="${W}" height="${H}"><rect width="${W}" height="${H}" fill="#fff"/>
    <path d="M.5 0v${H - .5}H${W}${ticks}" fill="none" stroke="#262626"/>${labels}</svg>`;
}
```
